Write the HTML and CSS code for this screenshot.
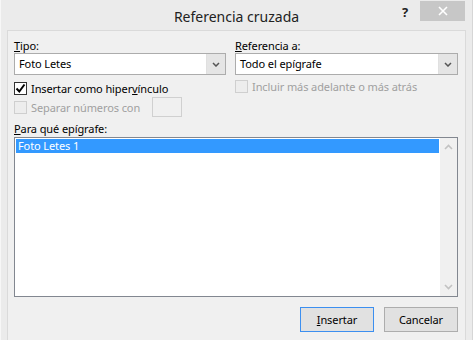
FILE: index.html
```html
<!DOCTYPE html>
<html lang="es">
<head>
    <meta charset="UTF-8">
    <title>Referencia cruzada</title>
    <link rel="stylesheet" href="styles.css">
</head>
<body>
    <div class="window">
        <div class="titlebar">
            <span class="title">Referencia cruzada</span>
            <span class="help">?</span>
            <span class="close">
                <svg width="10" height="10" viewBox="0 0 10 10"><path d="M1 1L9 9M9 1L1 9" stroke="#fff" stroke-width="1.6"/></svg>
            </span>
        </div>
        <div class="client">
            <div class="top">
                <div class="col">
                    <div class="label"><u>T</u>ipo:</div>
                    <div class="combo">
                        <span class="value">Foto Letes</span>
                        <span class="arrow"><svg width="8" height="5" viewBox="0 0 8 5"><path d="M1 1L4 4L7 1" fill="none" stroke="#555" stroke-width="1.5"/></svg></span>
                    </div>
                    <label class="check">
                        <span class="box checked"><svg width="11" height="11" viewBox="0 0 11 11"><path d="M1.5 5.5L4.3 8.5L9.5 1.5" fill="none" stroke="#000" stroke-width="2"/></svg></span>
                        <span>Insertar como hiper<u>v</u>ínculo</span>
                    </label>
                    <div class="check disabled sep">
                        <span class="box"></span>
                        <span>Separar números con</span>
                        <span class="smallbox"></span>
                    </div>
                </div>
                <div class="col">
                    <div class="label"><u>R</u>eferencia a:</div>
                    <div class="combo">
                        <span class="value">Todo el epígrafe</span>
                        <span class="arrow"><svg width="8" height="5" viewBox="0 0 8 5"><path d="M1 1L4 4L7 1" fill="none" stroke="#555" stroke-width="1.5"/></svg></span>
                    </div>
                    <div class="check disabled right">
                        <span class="box"></span>
                        <span>Incluir más adelante o más atrás</span>
                    </div>
                </div>
            </div>
            <div class="label list-label"><u>P</u>ara qué epígrafe:</div>
            <div class="listbox">
                <div class="items">
                    <div class="item selected">Foto Letes 1</div>
                </div>
                <div class="scrollbar">
                    <svg width="9" height="6" viewBox="0 0 9 6"><path d="M1 5L4.5 1.5L8 5" fill="none" stroke="#c2c2c2" stroke-width="1.6"/></svg>
                    <svg width="9" height="6" viewBox="0 0 9 6"><path d="M1 1L4.5 4.5L8 1" fill="none" stroke="#c2c2c2" stroke-width="1.6"/></svg>
                </div>
            </div>
            <div class="buttons">
                <button class="btn default"><u>I</u>nsertar</button>
                <button class="btn">Cancelar</button>
            </div>
        </div>
    </div>
</body>
</html>
```

FILE: styles.css
```css
body {
    margin: 0;
    font-family: "Noto Sans", "Open Sans", sans-serif;
    font-size: 11px;
    letter-spacing: -0.1px;
    color: #000;
    background: #ebebeb;
}
.window {
    width: 473px;
    height: 340px;
    overflow: hidden;
    box-sizing: border-box;
    border-left: 1px solid #f7f7f7;
    border-right: 1px solid #d6d6d6;
}
.titlebar {
    position: relative;
    height: 30px;
    display: flex;
    justify-content: center;
    align-items: center;
}
.title {
    font-size: 14px;
    letter-spacing: 0;
    color: #222;
    margin-top: 2px;
}
.help {
    position: absolute;
    left: 401px;
    top: 3px;
    font-weight: bold;
    font-size: 13px;
    color: #222;
}
.close {
    position: absolute;
    left: 419px;
    top: 1px;
    width: 45px;
    height: 20px;
    background: #c7c7c7;
    display: flex;
    align-items: center;
    justify-content: center;
}
.client {
    margin: 0 6px;
    height: 320px;
    border: 1px solid #dadada;
    background: #f0f0f0;
    padding: 7px 7px 0 6px;
}
.top {
    display: grid;
    grid-template-columns: 212px 223px;
    column-gap: 9px;
}
.col {
    display: flex;
    flex-direction: column;
}
.label {
    height: 15px;
    line-height: 15px;
}
.combo {
    height: 22px;
    box-sizing: border-box;
    border: 1px solid #acacac;
    background: #fff;
    display: flex;
    align-items: stretch;
}
.combo .value {
    flex: 1;
    padding-left: 4px;
    line-height: 20px;
}
.combo .arrow {
    width: 18px;
    background: #e5e5e5;
    border-left: 1px solid #e0e0e0;
    display: flex;
    align-items: center;
    justify-content: center;
}
.check {
    display: flex;
    align-items: center;
    gap: 4px;
    height: 16px;
    margin-top: 5px;
}
.check.right {
    margin-top: 3px;
}
.box {
    width: 11px;
    height: 11px;
    border: 1px solid #333;
    background: #fff;
    display: flex;
    align-items: center;
    justify-content: center;
}
.check.disabled {
    color: #a0a0a0;
}
.check.disabled .box {
    border-color: #cfcfcf;
    background: #ededed;
}
.sep {
    height: 20px;
    margin-top: 1px;
}
.smallbox {
    width: 28px;
    height: 18px;
    margin-left: 8px;
    border: 1px solid #d0d0d0;
    background: #f0f0f0;
}
.list-label {
    height: 16px;
    line-height: 16px;
    margin-top: 4px;
}
.listbox {
    height: 160px;
    box-sizing: border-box;
    border: 1px solid #828790;
    background: #fff;
    display: flex;
}
.items {
    flex: 1;
    padding: 1px;
}
.item {
    height: 14px;
    line-height: 14px;
    padding-left: 2px;
}
.item.selected {
    background: #3399ff;
    color: #fff;
}
.scrollbar {
    width: 17px;
    background: #f0f0f0;
    display: flex;
    flex-direction: column;
    justify-content: space-between;
    align-items: center;
    padding: 6px 0;
}
.buttons {
    display: flex;
    justify-content: flex-end;
    gap: 10px;
    margin-top: 10px;
}
.btn {
    width: 74px;
    height: 25px;
    font-family: inherit;
    font-size: 11px;
    letter-spacing: -0.1px;
    background: #e1e1e1;
    border: 1px solid #adadad;
    padding: 0;
    color: #000;
}
.btn.default {
    border-color: #3c8ff0;
}
```
